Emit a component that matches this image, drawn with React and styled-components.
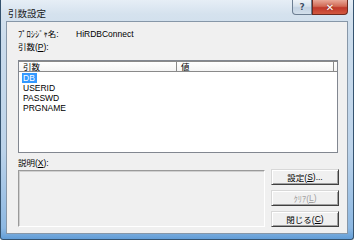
import React from "react";
import styled, { createGlobalStyle } from "styled-components";

const GlobalStyle = createGlobalStyle`
  html, body {
    margin: 0;
    padding: 0;
    background: #ffffff;
  }
  body {
    font-family: "Liberation Sans", "Noto Sans CJK JP", sans-serif;
    font-size: 8.5px;
    color: #000;
  }
`;

const Window = styled.div`
  width: 354px;
  height: 240px;
  box-sizing: border-box;
  padding: 0 5px 5px 5px;
  display: flex;
  flex-direction: column;
  border: 1px solid #35536f;
  border-top: none;
  border-radius: 0 0 3px 3px;
  background: linear-gradient(
    180deg,
    #e6eef6 0px,
    #d5e2ee 14px,
    #cbdcec 40px,
    #bcd3ea 150px,
    #8db8e2 228px,
    #5f9bd6 240px
  );
`;

const TitleBar = styled.div`
  height: 22px;
  display: flex;
  align-items: flex-start;
  justify-content: space-between;
`;

const Title = styled.div`
  margin: 6px 0 0 2px;
  font-family: "Noto Sans CJK JP", sans-serif;
  font-size: 9.5px;
  line-height: 14px;
  color: #1a1a1a;
`;

const CaptionButtons = styled.div`
  display: flex;
`;

const CaptionButton = styled.div`
  width: ${(p) => p.$w}px;
  height: 15px;
  box-sizing: border-box;
  display: flex;
  align-items: center;
  justify-content: center;
  border: 1px solid ${(p) => (p.$close ? "#6e2a1f" : "#6c7e92")};
  border-top: none;
  border-radius: ${(p) => (p.$close ? "0 0 4px 0" : "0 0 0 4px")};
  background: ${(p) =>
    p.$close
      ? "linear-gradient(180deg, #e9a898 0%, #d26a55 45%, #c0392b 55%, #d2583f 100%)"
      : "linear-gradient(180deg, #eef3f8 0%, #d5e0eb 45%, #c3d2e2 55%, #d3e0ec 100%)"};
  color: ${(p) => (p.$close ? "#ffffff" : "#3b4f66")};
  font-family: "DejaVu Sans", sans-serif;
  font-weight: bold;
  font-size: ${(p) => (p.$close ? 10 : 9)}px;
  text-shadow: ${(p) => (p.$close ? "0 0 2px #7a2314" : "0 0 1px #ffffff")};
`;

const Client = styled.div`
  flex: 1;
  display: flex;
  flex-direction: column;
  border: 1px solid #8797a8;
  background: #f0f0f0;
  padding: 7px 9px 6px 11px;
`;

const InfoRow = styled.div`
  display: flex;
  line-height: 11px;
  height: 11px;
`;

const InfoName = styled.span`
  width: 58px;
`;

const Label = styled.div`
  line-height: 11px;
  height: 11px;
  margin-top: ${(p) => p.$mt || 0}px;
`;

const ListBox = styled.div`
  margin-top: 7px;
  height: 93px;
  box-sizing: border-box;
  border: 1px solid #828790;
  background: #ffffff;
  display: flex;
  flex-direction: column;
`;

const Header = styled.div`
  display: grid;
  grid-template-columns: 158px 157px 1fr;
  height: 11px;
  box-sizing: border-box;
  border-top: 1px solid #8a8a8a;
  border-bottom: 1px solid #8a8a8a;
  background: linear-gradient(180deg, #ffffff, #f4f4f4);
`;

const HeaderCell = styled.div`
  padding-left: 4px;
  line-height: 9px;
  border-right: ${(p) => (p.$last ? "none" : "1px solid #8a8a8a")};
  font-family: "Noto Sans CJK JP", sans-serif;
`;

const Rows = styled.div`
  padding-top: 1px;
  display: flex;
  flex-direction: column;
`;

const Row = styled.div`
  height: 10px;
  line-height: 10px;
  padding-left: 3px;
`;

const RowText = styled.span`
  display: inline-block;
  padding: 0 2px 0 1px;
  background: ${(p) => (p.$selected ? "#3399ff" : "transparent")};
  color: ${(p) => (p.$selected ? "#ffffff" : "#000000")};
`;

const Bottom = styled.div`
  margin-top: 5px;
  display: flex;
  align-items: flex-end;
  gap: 6px;
`;

const LeftColumn = styled.div`
  flex: 1;
  display: flex;
  flex-direction: column;
`;

const DescBox = styled.div`
  margin-top: 1px;
  height: 57px;
  box-sizing: border-box;
  border: 1px solid;
  border-color: #9a9a9a #ffffff #ffffff #9a9a9a;
  box-shadow: inset 1px 1px 0 #d0d0d0;
  background: #f0f0f0;
`;

const ButtonColumn = styled.div`
  width: 68px;
  margin-right: -1px;
  display: flex;
  flex-direction: column;
  gap: 5px;
`;

const Button = styled.div`
  height: 16px;
  box-sizing: border-box;
  display: flex;
  align-items: center;
  justify-content: center;
  background: #f0f0f0;
  border: 1px solid;
  border-color: #d8d8d8 #404040 #404040 #d8d8d8;
  box-shadow: inset 1px 1px 0 #ffffff, inset -1px -1px 0 #a0a0a0;
  color: ${(p) => (p.$disabled ? "#a0a0a0" : "#000000")};
  font-size: 8.5px;
`;

const args = ["DB", "USERID", "PASSWD", "PRGNAME"];

export default function App() {
  return (
    <>
      <GlobalStyle />
      <Window>
        <TitleBar>
          <Title>引数設定</Title>
          <CaptionButtons>
            <CaptionButton $w={20}>?</CaptionButton>
            <CaptionButton $w={36} $close>
              ✕
            </CaptionButton>
          </CaptionButtons>
        </TitleBar>
        <Client>
          <InfoRow>
            <InfoName>ﾌﾟﾛｼｼﾞｬ名:</InfoName>
            <span>HiRDBConnect</span>
          </InfoRow>
          <Label $mt={2}>
            引数(<u>P</u>):
          </Label>
          <ListBox>
            <Header>
              <HeaderCell>引数</HeaderCell>
              <HeaderCell>値</HeaderCell>
              <HeaderCell $last />
            </Header>
            <Rows>
              {args.map((a, i) => (
                <Row key={a}>
                  <RowText $selected={i === 0}>{a}</RowText>
                </Row>
              ))}
            </Rows>
          </ListBox>
          <Bottom>
            <LeftColumn>
              <Label>
                説明(<u>X</u>):
              </Label>
              <DescBox />
            </LeftColumn>
            <ButtonColumn>
              <Button>
                設定(<u>S</u>)...
              </Button>
              <Button $disabled>
                ｸﾘｱ(<u>L</u>)
              </Button>
              <Button>
                閉じる(<u>C</u>)
              </Button>
            </ButtonColumn>
          </Bottom>
        </Client>
      </Window>
    </>
  );
}
